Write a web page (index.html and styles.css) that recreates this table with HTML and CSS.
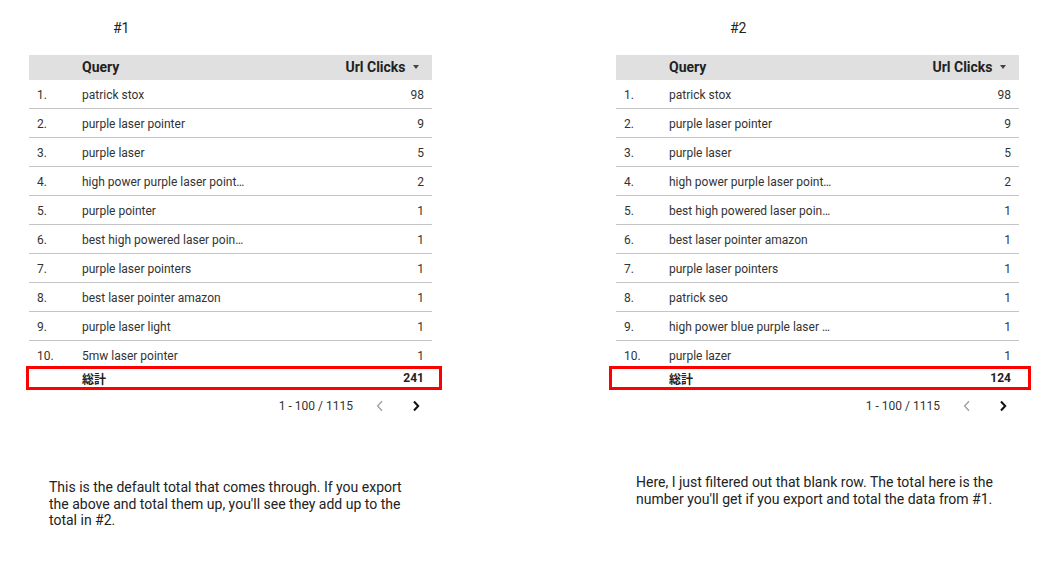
FILE: index.html
```html
<!DOCTYPE html>
<html>
<head>
<meta charset="utf-8">
<link rel="stylesheet" href="styles.css">
</head>
<body>
<div class="page">
  <section class="panel">
    <div class="title title-1">#1</div>
    <div class="table">
      <div class="row head"><span class="idx"></span><span class="q">Query</span><span class="v">Url Clicks <span class="caret"></span></span></div>
      <div class="row"><span class="idx">1.</span><span class="q">patrick stox</span><span class="v">98</span></div>
      <div class="row"><span class="idx">2.</span><span class="q">purple laser pointer</span><span class="v">9</span></div>
      <div class="row"><span class="idx">3.</span><span class="q">purple laser</span><span class="v">5</span></div>
      <div class="row"><span class="idx">4.</span><span class="q">high power purple laser point…</span><span class="v">2</span></div>
      <div class="row"><span class="idx">5.</span><span class="q">purple pointer</span><span class="v">1</span></div>
      <div class="row"><span class="idx">6.</span><span class="q">best high powered laser poin…</span><span class="v">1</span></div>
      <div class="row"><span class="idx">7.</span><span class="q">purple laser pointers</span><span class="v">1</span></div>
      <div class="row"><span class="idx">8.</span><span class="q">best laser pointer amazon</span><span class="v">1</span></div>
      <div class="row"><span class="idx">9.</span><span class="q">purple laser light</span><span class="v">1</span></div>
      <div class="row last"><span class="idx">10.</span><span class="q">5mw laser pointer</span><span class="v">1</span></div>
      <div class="row total"><span class="idx"></span><span class="q">総計</span><span class="v">241</span><div class="highlight hl-1"></div></div>
    </div>
    <div class="pager">
      <span class="range">1 - 100 / 1115</span>
      <span class="chev prev"><svg width="10" height="12" viewBox="0 0 10 12"><polyline points="7,1.2 2.6,6 7,10.8" fill="none" stroke="#9e9e9e" stroke-width="1.3"/></svg></span>
      <span class="chev next"><svg width="10" height="12" viewBox="0 0 10 12"><polyline points="3,1.5 7.2,6 3,10.5" fill="none" stroke="#111" stroke-width="2"/></svg></span>
    </div>
    <p class="note note-1">This is the default total that comes through. If you export<br>the above and total them up, you'll see they add up to the<br>total in #2.</p>
  </section>
  <section class="panel">
    <div class="title title-2">#2</div>
    <div class="table">
      <div class="row head"><span class="idx"></span><span class="q">Query</span><span class="v">Url Clicks <span class="caret"></span></span></div>
      <div class="row"><span class="idx">1.</span><span class="q">patrick stox</span><span class="v">98</span></div>
      <div class="row"><span class="idx">2.</span><span class="q">purple laser pointer</span><span class="v">9</span></div>
      <div class="row"><span class="idx">3.</span><span class="q">purple laser</span><span class="v">5</span></div>
      <div class="row"><span class="idx">4.</span><span class="q">high power purple laser point…</span><span class="v">2</span></div>
      <div class="row"><span class="idx">5.</span><span class="q">best high powered laser poin…</span><span class="v">1</span></div>
      <div class="row"><span class="idx">6.</span><span class="q">best laser pointer amazon</span><span class="v">1</span></div>
      <div class="row"><span class="idx">7.</span><span class="q">purple laser pointers</span><span class="v">1</span></div>
      <div class="row"><span class="idx">8.</span><span class="q">patrick seo</span><span class="v">1</span></div>
      <div class="row"><span class="idx">9.</span><span class="q">high power blue purple laser …</span><span class="v">1</span></div>
      <div class="row last"><span class="idx">10.</span><span class="q">purple lazer</span><span class="v">1</span></div>
      <div class="row total"><span class="idx"></span><span class="q">総計</span><span class="v">124</span><div class="highlight hl-2"></div></div>
    </div>
    <div class="pager">
      <span class="range">1 - 100 / 1115</span>
      <span class="chev prev"><svg width="10" height="12" viewBox="0 0 10 12"><polyline points="7,1.2 2.6,6 7,10.8" fill="none" stroke="#9e9e9e" stroke-width="1.3"/></svg></span>
      <span class="chev next"><svg width="10" height="12" viewBox="0 0 10 12"><polyline points="3,1.5 7.2,6 3,10.5" fill="none" stroke="#111" stroke-width="2"/></svg></span>
    </div>
    <p class="note note-2">Here, I just filtered out that blank row. The total here is the<br>number you'll get if you export and total the data from #1.</p>
  </section>
</div>
</body>
</html>
```

FILE: styles.css
```css
html, body {
  margin: 0;
  padding: 0;
  background: #ffffff;
}
body {
  font-family: Roboto, "Noto Sans CJK JP", sans-serif;
  color: #212121;
}
.page {
  display: flex;
  gap: 184px;
  padding-left: 29px;
}
.panel {
  width: 403px;
  display: flex;
  flex-direction: column;
}
.title {
  font-size: 14px;
  line-height: 16px;
  height: 16px;
  margin-top: 20px;
  margin-bottom: 19px;
  color: #222;
}
.title-1 { padding-left: 84px; }
.title-2 { padding-left: 114px; }
.table {
  display: flex;
  flex-direction: column;
}
.row {
  position: relative;
  display: flex;
  align-items: center;
  height: 27px;
  padding-top: 1px;
  border-bottom: 1px solid #c4c4c4;
  font-size: 12px;
  color: #333;
}
.row .idx {
  width: 45px;
  padding-left: 8px;
}
.row .q {
  flex: 1;
  white-space: nowrap;
}
.row .v {
  padding-right: 8px;
  text-align: right;
}
.row.head {
  height: 24px;
  padding-top: 0;
  padding-bottom: 1px;
  border-bottom: none;
  background: #e0e0e0;
  font-size: 14px;
  font-weight: 700;
  color: #222;
}
.row.head .v {
  padding-right: 13px;
}
.caret {
  display: inline-block;
  width: 0;
  height: 0;
  border-left: 3.5px solid transparent;
  border-right: 3.5px solid transparent;
  border-top: 4px solid #444;
  margin-left: 4px;
  vertical-align: middle;
  position: relative;
  top: -1px;
}
.row.last {
  height: 26px;
  padding-top: 0;
  border-bottom: none;
  align-items: flex-start;
  line-height: 30px;
  overflow: hidden;
}
.row.total {
  height: 22px;
  padding-top: 0;
  border-bottom: none;
  font-weight: 700;
  color: #222;
}
.highlight {
  position: absolute;
  top: -1px;
  height: 18px;
  border: 3px solid #ff0000;
}
.hl-1 {
  left: -3px;
  width: 410px;
}
.hl-2 {
  left: -7px;
  width: 416px;
}
.pager {
  display: flex;
  align-items: center;
  justify-content: flex-end;
  height: 34px;
  padding-right: 4px;
  font-size: 12px;
  color: #333;
}
.chev {
  display: flex;
  align-items: center;
  justify-content: center;
  width: 24px;
  height: 24px;
}
.chev.prev {
  margin-left: 15px;
  margin-right: 12px;
}
.note {
  font-size: 14px;
  line-height: 16.5px;
  color: #222;
  margin: 0;
}
.note-1 {
  margin-top: 56px;
  padding-left: 20px;
}
.note-2 {
  margin-top: 51px;
  padding-left: 20px;
}
```
